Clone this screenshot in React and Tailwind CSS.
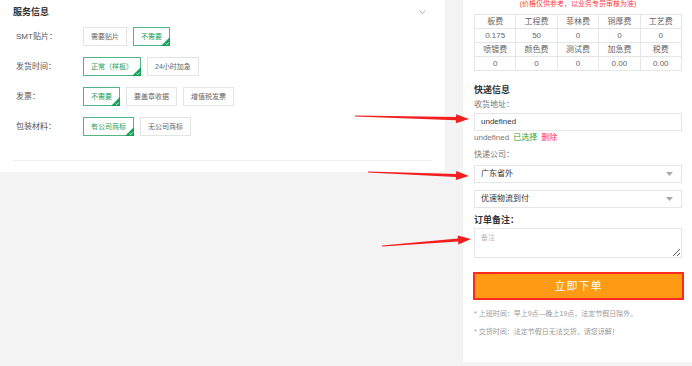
const services = [
  { label: 'SMT贴片：', options: ['需要贴片', '不需要'], active: 1 },
  { label: '发货时间：', options: ['正常（样板）', '24小时加急'], active: 0 },
  { label: '发票：', options: ['不需要', '要盖章收据', '增值税发票'], active: 0 },
  { label: '包装材料：', options: ['有公司商标', '无公司商标'], active: 0 },
];

const fees = [
  ['板费', '工程费', '菲林费', '铜厚费', '工艺费'],
  ['0.175', '50', '0', '0', '0'],
  ['喷镀费', '颜色费', '测试费', '加急费', '税费'],
  ['0', '0', '0', '0.00', '0.00'],
];

// red annotation arrows: tapered shaft + triangular head
const arrows = [
  [355, 116, 469, 119],
  [368, 172, 469, 176],
  [382, 246, 471, 239],
];

function arrowPoints([x1, y1, x2, y2]) {
  const len = Math.hypot(x2 - x1, y2 - y1);
  const ux = (x2 - x1) / len;
  const uy = (y2 - y1) / len;
  const nx = -uy;
  const ny = ux;
  const head = 13;
  const bx = x2 - ux * head;
  const by = y2 - uy * head;
  const p = (x, y, w) => `${x + nx * w},${y + ny * w}`;
  return [
    p(x1, y1, 0.4),
    p(bx, by, 1.6),
    p(bx, by, 4.5),
    `${x2},${y2}`,
    p(bx, by, -4.5),
    p(bx, by, -1.6),
    p(x1, y1, -0.4),
  ].join(' ');
}

function OptionButton({ text, active }) {
  return (
    <div
      className={`relative flex h-[19px] items-center border px-[7px] text-[7px] leading-none ${
        active ? 'border-[#52b585] text-[#22a060]' : 'border-[#e4e4e4] text-[#666]'
      }`}
    >
      {text}
      {active && (
        <svg className="absolute -bottom-px -right-px" width="9" height="9" viewBox="0 0 9 9">
          <polygon points="9,0 9,9 0,9" fill="#17a05a" />
          <path d="M4.6 6.6 L5.8 7.6 L7.8 5.4" stroke="#fff" strokeWidth="0.8" fill="none" />
        </svg>
      )}
    </div>
  );
}

function SelectBox({ value }) {
  return (
    <div className="flex h-[18px] items-center justify-between border border-[#e6e6e6] pl-[6px] pr-[8px] text-[8px] text-[#333]">
      <span>{value}</span>
      <svg width="7" height="4" viewBox="0 0 7 4">
        <polygon points="0,0 7,0 3.5,4" fill="#a8a8a8" />
      </svg>
    </div>
  );
}

export default function App() {
  return (
    <div className="relative flex h-[366px] w-[692px] items-start overflow-hidden bg-[#f3f3f3] font-['Liberation_Sans','Noto_Sans_CJK_SC',sans-serif]">
      {/* left: service options */}
      <div className="h-[172px] w-[445px] bg-white px-[13px] pt-[6px]">
        <div className="flex items-center justify-between">
          <span className="text-[9px] font-bold leading-[12px] text-[#333]">服务信息</span>
          <svg className="mr-[6px]" width="7" height="4" viewBox="0 0 7 4">
            <path d="M0.5 0.5 L3.5 3.3 L6.5 0.5" stroke="#999" strokeWidth="0.8" fill="none" />
          </svg>
        </div>
        <div className="mt-[9px] flex flex-col gap-[11px] pl-[3px]">
          {services.map((row) => (
            <div key={row.label} className="flex items-center">
              <span className="w-[67px] text-[8px] text-[#555]">{row.label}</span>
              <div className="flex gap-[6px]">
                {row.options.map((o, i) => (
                  <OptionButton key={o} text={o} active={i === row.active} />
                ))}
              </div>
            </div>
          ))}
        </div>
        <div className="mt-[24px] border-t border-[#efefef]" />
      </div>

      {/* right: order summary */}
      <div className="ml-[18px] h-[362px] w-[229px] bg-white pl-[11px] pr-[10px]">
        <div className="text-center text-[7px] leading-[8px] text-[#ff3b3b]">
          (价格仅供参考，以业务专员审核为准)
        </div>
        <div className="mt-[6px] border-l border-t border-[#e6e6e6]">
          {fees.map((row, r) => (
            <div key={r} className="grid grid-cols-5">
              {row.map((c, i) => (
                <div
                  key={i}
                  className="flex h-[14px] items-center justify-center border-b border-r border-[#e6e6e6] text-[8px] text-[#666]"
                >
                  {c}
                </div>
              ))}
            </div>
          ))}
        </div>

        <div className="mt-[13px] text-[9px] font-bold leading-[12px] text-[#333]">快递信息</div>
        <div className="mt-[3px] text-[8px] leading-[12px] text-[#777]">收货地址：</div>
        <div className="mt-[2px] flex h-[18px] items-center border border-[#e6e6e6] pl-[6px] text-[8px] text-[#333]">
          undefined
        </div>
        <div className="mt-[1px] flex gap-[4px] text-[8px] leading-[12px]">
          <span className="text-[#777]">undefined</span>
          <span className="text-[#2aa33c]">已选择</span>
          <span className="text-[#ff3355]">删除</span>
        </div>
        <div className="mt-[5px] text-[8px] leading-[12px] text-[#777]">快递公司：</div>
        <div className="mt-[4px]">
          <SelectBox value="广东省外" />
        </div>
        <div className="mt-[7px]">
          <SelectBox value="优速物流到付" />
        </div>
        <div className="mt-[6px] text-[9px] font-bold leading-[12px] text-[#333]">订单备注：</div>
        <textarea
          className="mt-[2px] block h-[30px] w-full border border-[#e6e6e6] px-[6px] py-[4px] text-[7px] leading-[10px] text-[#333] outline-none placeholder:text-[#bbb]"
          placeholder="备注"
        />
        <button className="-mx-px mt-[14px] flex h-[28px] w-[calc(100%+3px)] items-center justify-center border-2 border-[#ff2a1f] bg-[#ff9a15] text-[11px] tracking-[1px] text-white">
          立即下单
        </button>
        <div className="mt-[9px] text-[7px] leading-[10px] text-[#999]">* 上班时间：早上9点—晚上19点，法定节假日除外。</div>
        <div className="mt-[8px] text-[7px] leading-[10px] text-[#999]">* 交货时间：法定节假日无法交货，请您谅解！</div>
      </div>

      {/* annotation arrows */}
      <svg className="pointer-events-none absolute left-0 top-0" width="692" height="366">
        {arrows.map((a, i) => (
          <polygon key={i} points={arrowPoints(a)} fill="#f51d1d" />
        ))}
      </svg>
    </div>
  );
}
